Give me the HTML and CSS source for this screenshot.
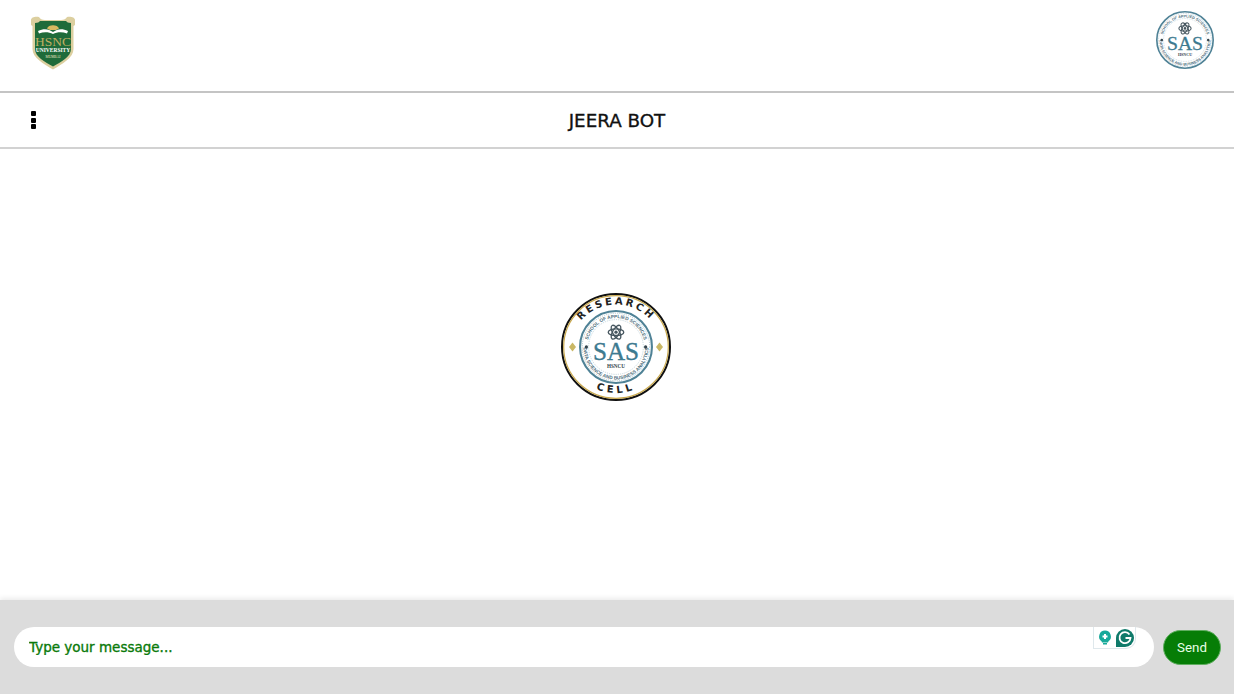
FILE: index.html
```html
<!DOCTYPE html>
<html lang="en">
  <head>
    <meta charset="UTF-8" />
    <meta name="viewport" content="width=device-width, initial-scale=1.0" />
    <title>JEERA BOT</title>
    <link rel="stylesheet" href="styles.css">
  </head>
  <body>
    <svg class="defs" width="0" height="0">
      <defs>
        <path id="ring-top" d="M 11 50 A 39 39 0 0 1 89 50" />
        <path id="ring-bottom" d="M 6 50 A 44 44 0 0 0 94 50" />
        <g id="sas-seal">
          <circle cx="50" cy="50" r="48.600" fill="#fff" stroke="#4f8296" stroke-width="2.800" />
          <circle cx="50" cy="50" r="45.600" fill="none" stroke="#7fa3b2" stroke-width="0.800" stroke-dasharray="1.500 1.500" />
          <circle cx="50" cy="50" r="37" fill="none" stroke="#9dbac6" stroke-width="0.800" stroke-dasharray="1.500 1.500" />
          <text class="seal-ring"><textPath href="#ring-top" startOffset="50%" text-anchor="middle">SCHOOL OF APPLIED SCIENCES</textPath></text>
          <text class="seal-ring"><textPath href="#ring-bottom" startOffset="50%" text-anchor="middle">DATA SCIENCE AND BUSINESS ANALYTICS</textPath></text>
          <g fill="none" stroke="#46565f" stroke-width="1.800">
            <ellipse cx="50" cy="30" rx="10.500" ry="4.500" />
            <ellipse cx="50" cy="30" rx="10.500" ry="4.500" transform="rotate(60 50 30)" />
            <ellipse cx="50" cy="30" rx="10.500" ry="4.500" transform="rotate(120 50 30)" />
          </g>
          <circle cx="50" cy="30" r="2.200" fill="#46565f" />
          <text class="seal-sas" x="50" y="67" text-anchor="middle">SAS</text>
          <text class="seal-small" x="50" y="78" text-anchor="middle">HSNCU</text>
          <circle cx="10" cy="50" r="2.200" fill="#33444d" />
          <circle cx="90" cy="50" r="2.200" fill="#33444d" />
        </g>
      </defs>
    </svg>

    <header class="top-bar">
      <svg class="uni-logo" width="46" height="54" viewBox="0 0 46 54" role="img" aria-label="HSNC University">
        <path d="M1 4 C1 1 6 0 9 1 C10 3 12 4 15 4 L31 4 C34 4 36 3 37 1 C40 0 45 1 45 4 L45 9 L43.500 10 L43.500 33 C43.500 42 32 48 23 53.500 C14 48 2.500 42 2.500 33 L2.500 10 L1 9 Z" fill="#dccf9f" />
        <path d="M5 7 C8 7 9 6 10 5 L36 5 C37 6 38 7 41 7 L41 33 C41 41 31 46 23 50.500 C15 46 5 41 5 33 Z" fill="#1f6b3a" />
        <path d="M8 15 C14 12 19 13 23 16 C27 13 32 12 38 15 L37 17.500 C32 15.500 27 16 23 18 C19 16 14 15.500 9 17.500 Z" fill="#fff" />
        <path d="M17 12.500 C18 8 28 8 29 12.500 L26 14 L20 14 Z" fill="#d8b860" />
        <text class="uni-name" x="23" y="29.500" text-anchor="middle">HSNC</text>
        <text class="uni-sub" x="23" y="35.500" text-anchor="middle">UNIVERSITY</text>
        <text class="uni-city" x="23" y="42" text-anchor="middle">MUMBAI</text>
      </svg>
      <svg class="sas-logo" width="58" height="58" viewBox="0 0 100 100" role="img" aria-label="SAS HSNCU">
        <use href="#sas-seal" />
      </svg>
    </header>

    <nav class="title-bar">
      <button class="menu-btn" aria-label="Menu">
        <span class="dot"></span>
        <span class="dot"></span>
        <span class="dot"></span>
      </button>
      <h1 class="bot-title">JEERA BOT</h1>
    </nav>

    <main class="chat-area">
      <svg class="cell-logo" width="112" height="110" viewBox="0 0 112 110" role="img" aria-label="Research Cell">
        <defs>
          <path id="cell-top" d="M 11.500 55 A 44.500 42.500 0 0 1 100.500 55" />
          <path id="cell-bottom" d="M 8 55 A 48 46 0 0 0 104 55" />
        </defs>
        <ellipse cx="56" cy="55" rx="54" ry="53" fill="#fff" stroke="#111" stroke-width="2" />
        <ellipse cx="56" cy="55" rx="52.300" ry="51.300" fill="none" stroke="#c9a94f" stroke-width="1.200" />
        <text class="cell-text"><textPath href="#cell-top" startOffset="50%" text-anchor="middle">RESEARCH</textPath></text>
        <text class="cell-text wide"><textPath href="#cell-bottom" startOffset="50%" text-anchor="middle">CELL</textPath></text>
        <path d="M12.500 50.500 L16 55 L12.500 59.500 L9 55 Z" fill="#c9b765" />
        <path d="M99.500 50.500 L103 55 L99.500 59.500 L96 55 Z" fill="#c9b765" />
        <svg x="19" y="18" width="74" height="74" viewBox="0 0 100 100">
          <use href="#sas-seal" />
        </svg>
      </svg>
    </main>

    <footer class="input-bar">
      <div class="input-wrap">
        <input class="msg-input" type="text" placeholder="Type your message..." />
        <div class="grammar-badge">
          <svg width="16" height="17" viewBox="0 0 16 16">
            <path d="M8 1 A6 6 0 0 1 11.500 11.800 L11 13 L5 13 L4.500 11.800 A6 6 0 0 1 8 1 Z" fill="#17a99a" />
            <rect x="6" y="13.500" width="4" height="1.500" fill="#17a99a" />
            <path d="M7 4.500 H9 V6 H10.500 V8 H9 V9.500 H7 V8 H5.500 V6 H7 Z" fill="#fff" />
          </svg>
          <svg width="20" height="20" viewBox="0 0 20 20">
            <path d="M10 1 A9 9 0 1 1 10 19 L1 19 L1 10 A9 9 0 0 1 10 1 Z" fill="#0f7a6a" />
            <path d="M14.500 6.500 A5.500 5.500 0 1 0 15.500 10 L10.500 10" fill="none" stroke="#fff" stroke-width="1.800" />
          </svg>
        </div>
      </div>
      <button class="send-btn">Send</button>
    </footer>
  </body>
</html>
```

FILE: styles.css
```css
* {
  box-sizing: border-box;
}

body {
  margin: 0;
  height: 694px;
  display: flex;
  flex-direction: column;
  background-color: #fff;
  color: #111;
  font-family: "DejaVu Sans", Verdana, sans-serif;
  overflow: hidden;
}

.defs {
  display: none;
}

.seal-ring {
  font-family: "Liberation Sans", Arial, sans-serif;
  font-size: 6.500px;
  font-weight: bold;
  fill: #4f6f7e;
}

.seal-sas {
  font-family: "Liberation Serif", "Times New Roman", serif;
  font-size: 34px;
  fill: #3d7a90;
  stroke: #3d7a90;
  stroke-width: 0.5;
}

.seal-small {
  font-family: "Liberation Serif", "Times New Roman", serif;
  font-size: 7px;
  font-weight: bold;
  fill: #33444d;
}

.top-bar {
  height: 91px;
  flex: none;
  display: flex;
  justify-content: space-between;
  align-items: flex-start;
  padding: 11px 20px 0 30px;
}

.uni-logo {
  margin-top: 5px;
}

.uni-name {
  font-family: "Liberation Serif", serif;
  font-size: 13.500px;
  fill: #bfae62;
}

.uni-sub {
  font-family: "Liberation Serif", serif;
  font-size: 5.500px;
  font-weight: bold;
  fill: #fff;
}

.uni-city {
  font-family: "Liberation Serif", serif;
  font-size: 3.500px;
  fill: #f2e8c4;
}

.title-bar {
  height: 58px;
  flex: none;
  position: relative;
  display: flex;
  align-items: center;
  justify-content: center;
  border-top: 2px solid #c4c4c4;
  border-bottom: 2px solid #d2d2d2;
}

.menu-btn {
  position: absolute;
  left: 30px;
  top: 18px;
  width: 7px;
  padding: 0;
  display: flex;
  flex-direction: column;
  gap: 1.500px;
  border: none;
  background: none;
}

.dot {
  width: 5px;
  height: 5px;
  margin-left: 1px;
  border-radius: 1px;
  background-color: #000;
}

.bot-title {
  margin: 0;
  font-size: 18.300px;
  font-weight: normal;
  color: #111;
  -webkit-text-stroke: 0.35px #111;
}

.chat-area {
  flex: 1;
  display: flex;
  align-items: center;
  justify-content: center;
  padding: 0 2px 55px 0;
}

.cell-text {
  font-family: "DejaVu Sans", sans-serif;
  font-size: 10px;
  font-weight: bold;
  letter-spacing: 2.500px;
  fill: #222;
}

.cell-text.wide {
  letter-spacing: 3.500px;
}

.input-bar {
  height: 94px;
  flex: none;
  display: flex;
  align-items: center;
  gap: 9px;
  padding: 0 13px 0 14px;
  background-color: #dcdcdc;
  box-shadow: 0 -2px 5px rgba(0, 0, 0, 0.08);
}

.input-wrap {
  flex: 1;
  position: relative;
}

.msg-input {
  width: 100%;
  height: 40px;
  padding: 0 15px;
  border: none;
  border-radius: 20px;
  outline: none;
  background-color: #fff;
  font-family: "DejaVu Sans", Verdana, sans-serif;
  font-size: 13.500px;
  color: #0a7a0a;
  -webkit-text-stroke: 0.35px #0a7a0a;
}

.msg-input::placeholder {
  color: #0a7a0a;
  opacity: 1;
}

.grammar-badge {
  position: absolute;
  right: 18px;
  top: 0;
  width: 43px;
  height: 22px;
  display: flex;
  align-items: center;
  justify-content: center;
  gap: 2px;
  padding-left: 2px;
  background-color: #fff;
  border: 1px solid #dfe8ec;
  border-top: none;
  border-radius: 0 0 10px 0;
}

.send-btn {
  width: 58px;
  height: 35px;
  flex: none;
  border: 1px solid #5fae5f;
  border-radius: 18px;
  background-color: #067d06;
  color: #e8ffe8;
  font-family: Roboto, Arial, sans-serif;
  font-size: 13.330px;
}
```
